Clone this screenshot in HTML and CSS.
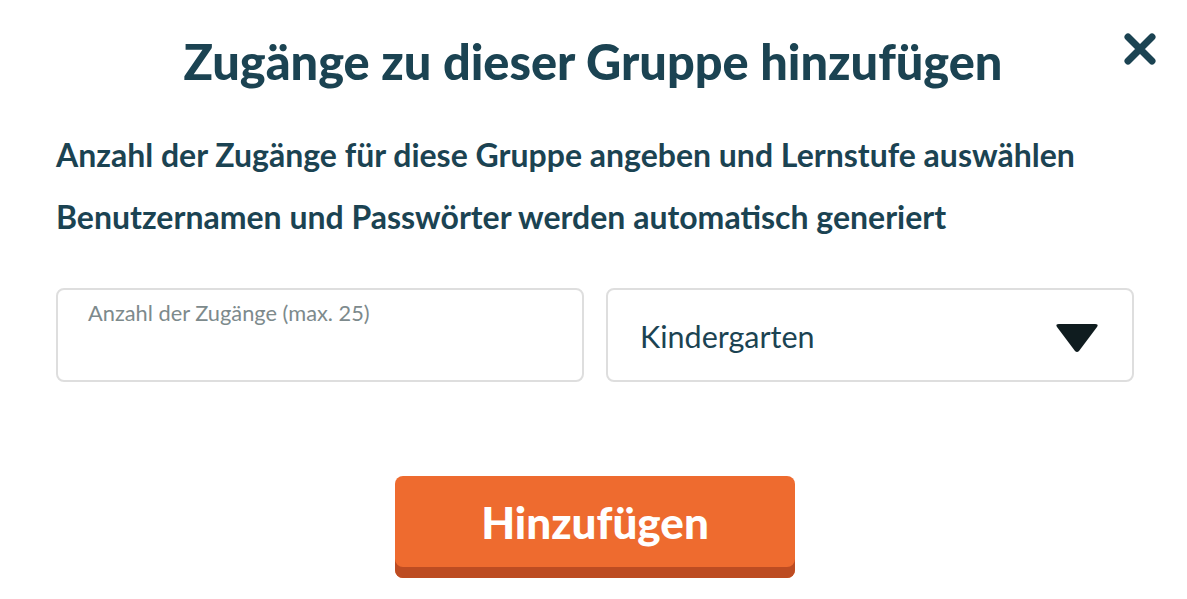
FILE: index.html
```html
<!DOCTYPE html>
<html lang="de">
<head>
    <meta charset="UTF-8">
    <meta name="viewport" content="width=device-width, initial-scale=1.0">
    <title>Zugänge hinzufügen</title>
    <link rel="stylesheet" href="styles.css">
</head>
<body>
    <div class="modal">
        <div class="modal-header">
            <h1>Zugänge zu dieser Gruppe hinzufügen</h1>
            <button class="close" aria-label="Schließen">
                <svg width="34" height="34" viewBox="0 0 34 34">
                    <path d="M5 5 L29 29 M29 5 L5 29" stroke="#1b4352" stroke-width="7" stroke-linecap="round"/>
                </svg>
            </button>
        </div>
        <p class="info">Anzahl der Zugänge für diese Gruppe angeben und Lernstufe auswählen</p>
        <p class="info">Benutzernamen und Passwörter werden automatisch generiert</p>

        <div class="fields">
            <label class="field">
                <span class="field-label">Anzahl der Zugänge (max. 25)</span>
                <input type="text" class="field-input">
            </label>
            <div class="field select">
                <span class="select-value">Kindergarten</span>
                <svg class="arrow" width="44" height="30" viewBox="0 0 44 30">
                    <path d="M4 1 H40 Q44 1 42 4 L24 28 Q22 30 20 28 L2 4 Q0 1 4 1 Z" fill="#0f1c1f"/>
                </svg>
            </div>
        </div>

        <div class="actions">
            <button class="btn-add">Hinzufügen</button>
        </div>
    </div>
</body>
</html>
```

FILE: styles.css
```css
/* Grundlayout */
body {
    margin: 0;
    background: #fff;
    font-family: Lato, "Open Sans", sans-serif;
    color: #1b4352;
}

.modal {
    width: 1187px;
    height: 599px;
    box-sizing: border-box;
    padding: 0 53px 0 56px;
}

.modal-header {
    position: relative;
    padding-top: 28px;
    text-align: center;
}

h1 {
    margin: 0;
    font-size: 48.7px;
    font-weight: 900;
    line-height: 66px;
    color: #1b4352;
    padding-right: 4px;
}

.close {
    position: absolute;
    top: 32px;
    right: -23px;
    background: none;
    border: 0;
    padding: 0;
    cursor: pointer;
}

.info {
    margin: 0;
    font-size: 32px;
    font-weight: 700;
    line-height: 62px;
    white-space: nowrap;
}

.info:first-of-type {
    margin-top: 30px;
}

/* Eingabefelder */
.fields {
    display: flex;
    gap: 22px;
    margin-top: 40px;
    width: 1078px;
}

.field {
    flex: none;
    width: 528px;
    height: 94px;
    box-sizing: border-box;
    border: 2px solid #dedede;
    border-radius: 8px;
    position: relative;
    display: block;
}

.field-label {
    position: absolute;
    left: 30px;
    top: 9px;
    font-size: 21.8px;
    color: #7d8a8c;
}

.field-input {
    position: absolute;
    left: 30px;
    right: 20px;
    bottom: 14px;
    width: auto;
    min-width: 0;
    border: 0;
    outline: none;
    font: inherit;
    font-size: 24px;
    background: transparent;
}

.select {
    display: flex;
    align-items: center;
    justify-content: space-between;
    padding: 0 33px 0 32px;
}

.select-value {
    font-size: 30.5px;
    color: #1b4352;
    margin-top: 2px;
}

.arrow {
    margin-top: 6px;
}

/* Button */
.actions {
    display: flex;
    justify-content: center;
    margin-top: 94px;
    width: 1078px;
}

.btn-add {
    width: 400px;
    height: 102px;
    border: 0;
    border-radius: 8px;
    background: #ee6b2f;
    box-shadow: inset 0 -11px 0 #bd4c22;
    color: #fff;
    font-family: Lato, sans-serif;
    font-size: 44px;
    font-weight: 900;
    padding-bottom: 12px;
    cursor: pointer;
}
```
